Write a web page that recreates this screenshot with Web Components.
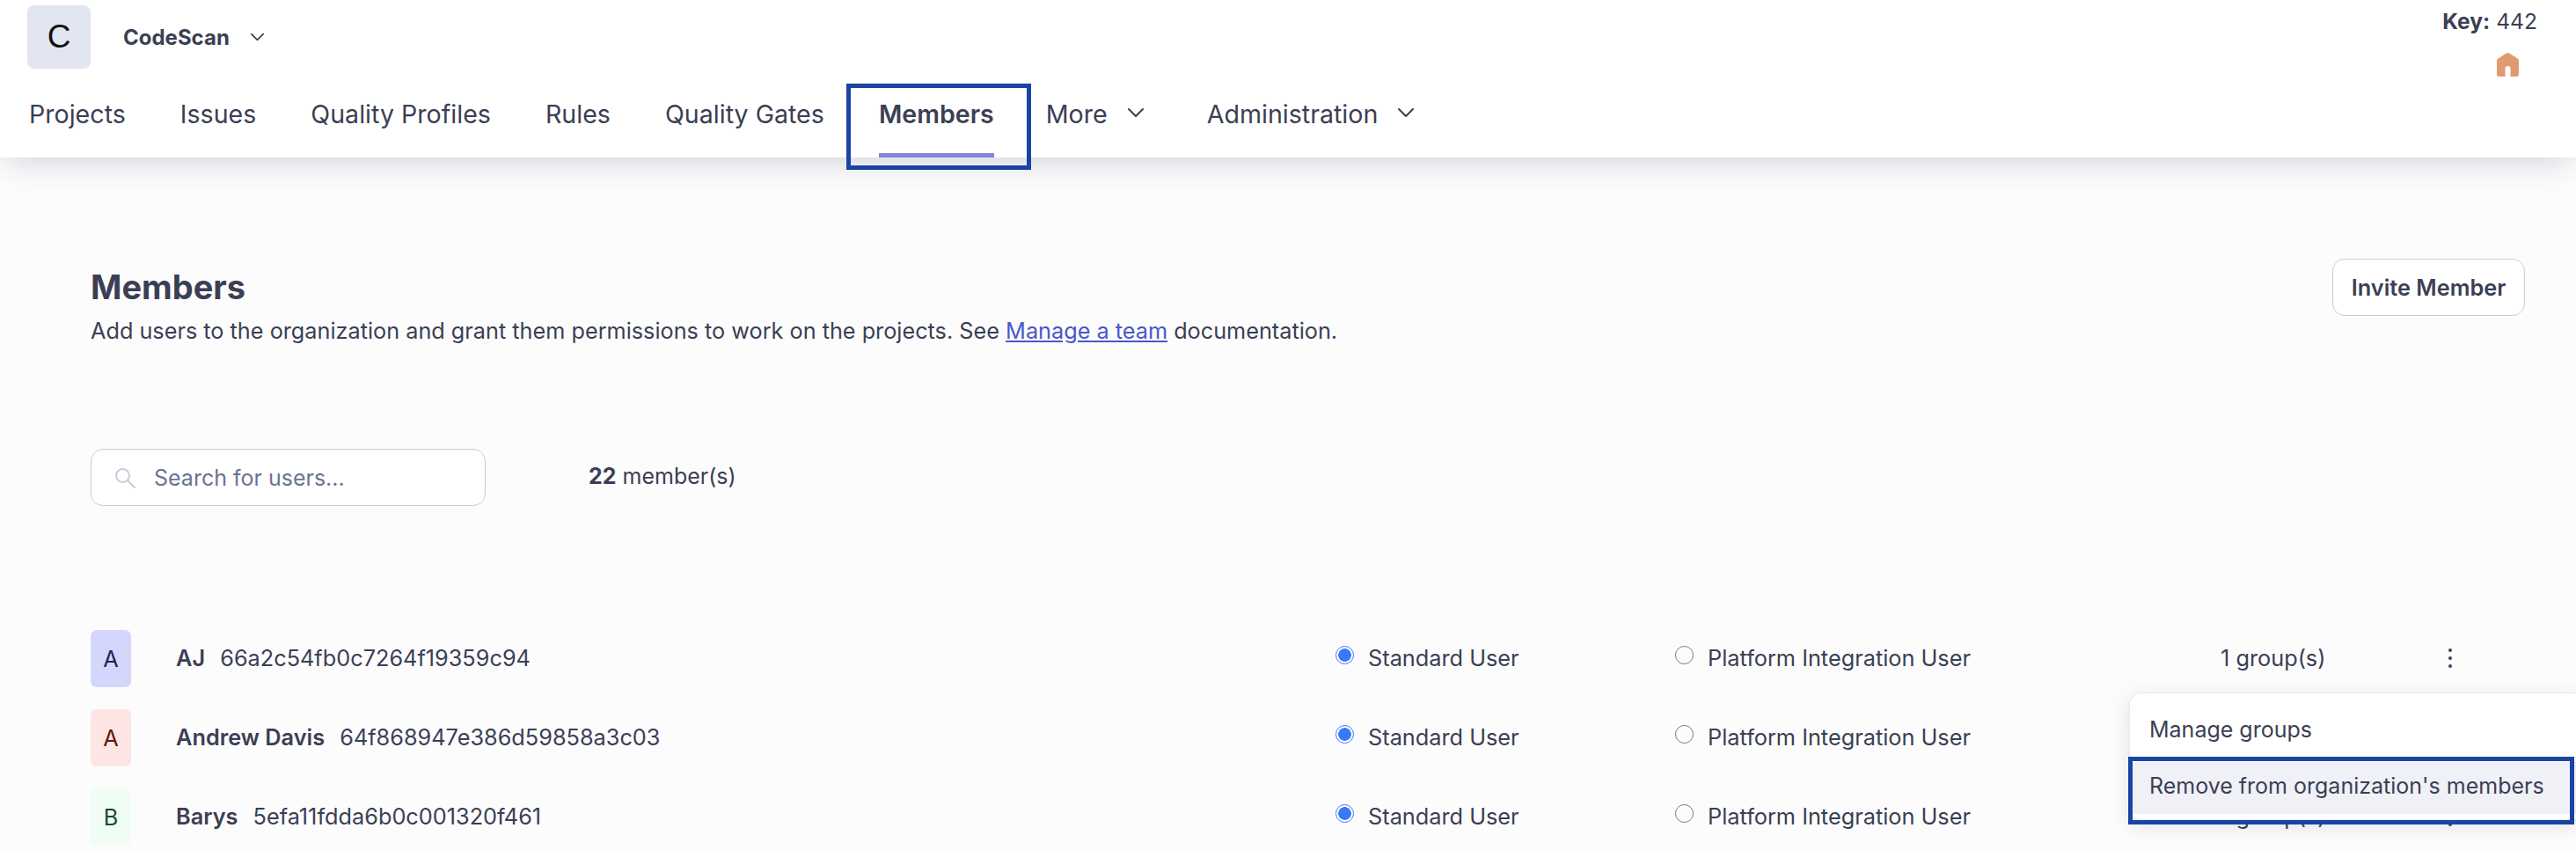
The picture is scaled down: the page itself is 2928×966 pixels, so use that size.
<!DOCTYPE html>
<html>
<head>
<meta charset="utf-8">
<title>Members</title>
<style>
  html, body { margin: 0; padding: 0; }
  body {
    width: 2928px;
    height: 966px;
    overflow: hidden;
    background: #fcfcfd;
    font-family: Inter, "Liberation Sans", sans-serif;
    color: #3b3f54;
  }
</style>
</head>
<body>
<cs-header></cs-header>
<cs-members></cs-members>

<script>
const chevron = `<svg width="18" height="10" viewBox="0 0 18 10" fill="none"><path d="M1 1l8 8 8-8" stroke="currentColor" stroke-width="2" stroke-linecap="round" stroke-linejoin="round"/></svg>`

class CsNavItem extends HTMLElement {
    constructor() {
        super()
        this.shadowDOM = this.attachShadow({mode:"open"})
        this.shadowDOM.innerHTML = `
            <style>
            :host {
                display: block;
                position: relative;
                height: 84px;
                font-size: 28.6px;
                line-height: 34px;
                padding-top: 18px;
                box-sizing: border-box;
                white-space: nowrap;
            }
            :host([active]) { font-weight: 600; }
            :host([active])::after {
                content: "";
                position: absolute;
                left: 0;
                right: 0;
                bottom: 0;
                height: 5px;
                background: #7f86d6;
            }
            .mark {
                display: none;
                position: absolute;
                left: -37px;
                right: -42px;
                top: 0;
                height: 98px;
                border: 5px solid #1a44a4;
                box-sizing: border-box;
            }
            :host([active]) .mark { display: block; }
            .chev { display: none; margin-left: 23px; line-height: 0; vertical-align: 7px; }
            .chev svg { display: block; }
            :host([menu]) .chev { display: inline-block; }
            </style>
            <slot></slot><span class="chev">${chevron}</span><span class="mark"></span>
        `
    }
}

class CsHeader extends HTMLElement {
    constructor() {
        super()
        this.shadowDOM = this.attachShadow({mode:"open"})
        this.shadowDOM.innerHTML = `
            <style>
            :host {
                display: block;
                position: relative;
                z-index: 1;
                height: 179px;
                background: #fff;
                box-shadow: 0 10px 34px -6px rgba(40,44,70,.2);
            }
            .top {
                display: flex;
                height: 95px;
                padding: 6px 44px 0 31px;
                box-sizing: border-box;
            }
            .logo {
                width: 72px;
                height: 72px;
                border-radius: 8px;
                background: #e2e5f2;
                color: #111;
                font-family: "Liberation Sans", sans-serif;
                font-size: 37px;
                display: flex;
                align-items: center;
                justify-content: center;
            }
            .org {
                display: flex;
                align-items: center;
                height: 72px;
                margin-left: 37px;
                font-size: 24px;
                font-weight: 700;
            }
            .org svg { margin-left: 24px; width: 15px; }
            .key {
                margin-left: auto;
                font-size: 24.6px;
                line-height: 36px;
                display: flex;
                flex-direction: column;
                align-items: flex-end;
            }
            .key b { font-weight: 700; }
            .key svg { margin: 18px 21px 0 0; display: block; }
            nav {
                display: flex;
                gap: 62px;
                padding-left: 33px;
            }
            cs-nav-item.more { margin-left: -3px; }
            cs-nav-item.admin { margin-left: 10px; }
            </style>
            <div class="top">
                <div class="logo">C</div>
                <div class="org">CodeScan ${chevron}</div>
                <div class="key">
                    <div><b>Key:</b> 442</div>
                    <svg width="25" height="27" viewBox="0 0 25 27"><path d="M10.800.600q1.700-1.100 3.400 0L23.500 6.500a3.200 3.200 0 0 1 1.500 2.700V24.500a2.500 2.500 0 0 1-2.500 2.500H15.500V18a3 3 0 0 0-6 0V27H2.500A2.500 2.500 0 0 1 0 24.500V9.200a3.200 3.200 0 0 1 1.500-2.700Z" fill="#e09a72"/></svg>
                </div>
            </div>
            <nav>
                <cs-nav-item>Projects</cs-nav-item>
                <cs-nav-item>Issues</cs-nav-item>
                <cs-nav-item>Quality Profiles</cs-nav-item>
                <cs-nav-item>Rules</cs-nav-item>
                <cs-nav-item>Quality Gates</cs-nav-item>
                <cs-nav-item active>Members</cs-nav-item>
                <cs-nav-item menu class="more">More</cs-nav-item>
                <cs-nav-item menu class="admin">Administration</cs-nav-item>
            </nav>
        `
    }
}

class CsRadio extends HTMLElement {
    constructor() {
        super()
        this.shadowDOM = this.attachShadow({mode:"open"})
        this.shadowDOM.innerHTML = `
            <style>
            :host {
                display: flex;
                align-items: center;
                gap: 16px;
                font-size: 25.3px;
                white-space: nowrap;
            }
            i {
                width: 21px;
                height: 21px;
                margin-top: -5px;
                border-radius: 50%;
                border: 1.5px solid #77797f;
                box-sizing: border-box;
                flex: none;
            }
            :host([checked]) i {
                border-color: #3a78f5;
                background: radial-gradient(circle, #3a78f5 0 7px, #fff 7.6px);
            }
            </style>
            <i></i><slot></slot>
        `
    }
}

class CsMemberRow extends HTMLElement {
    constructor() {
        super()
        this.shadowDOM = this.attachShadow({mode:"open"})
        const name = this.getAttribute("name")
        // the open row menu covers the group count and the dots of a covered row
        const covered = this.hasAttribute("covered")
        this.shadowDOM.innerHTML = `
            <style>
            :host {
                display: flex;
                align-items: center;
                height: 65px;
                font-size: 25.3px;
                margin-bottom: 25px;
                --bg: #d4d7fb;
                --fg: #1e2259;
            }
            .avatar {
                width: 46px;
                height: 65px;
                border-radius: 7px;
                background: var(--bg);
                color: var(--fg);
                display: flex;
                align-items: center;
                justify-content: center;
                flex: none;
            }
            .who { margin-left: 51px; width: 1318px; white-space: nowrap; }
            .who, cs-radio, .groups { margin-bottom: 3px; }
            .who b { font-weight: 600; margin-right: 10px; }
            .user { width: 386px; }
            .integration { width: 620px; }
            .groups { width: 258px; white-space: nowrap; }
            svg { display: block; margin-bottom: 2px; }
            </style>
            <div class="avatar">${name[0]}</div>
            <div class="who"><b>${name}</b> ${this.getAttribute("uid")}</div>
            <cs-radio class="user" checked>Standard User</cs-radio>
            <cs-radio class="integration">Platform Integration User</cs-radio>
            ${covered ? "" : `<div class="groups">1 group(s)</div>
            <svg width="6" height="24" viewBox="0 0 6 24" fill="#3b3f54"><circle cx="3" cy="3" r="2"/><circle cx="3" cy="12" r="2"/><circle cx="3" cy="21" r="2"/></svg>`}
        `
    }
}

class CsRowMenu extends HTMLElement {
    constructor() {
        super()
        this.shadowDOM = this.attachShadow({mode:"open"})
        this.shadowDOM.innerHTML = `
            <style>
            :host {
                display: block;
                position: absolute;
                left: 2420px;
                top: 787px;
                width: 508px;
                height: 145px;
                box-sizing: border-box;
                padding-top: 12px;
                background: #fff;
                border: 1px solid #e6e8f2;
                border-right: 0;
                border-radius: 14px 0 0 14px;
                box-shadow: 0 6px 24px rgba(40,44,70,.13);
                font-size: 25px;
                white-space: nowrap;
            }
            div { height: 66px; line-height: 58px; padding-left: 22px; }
            .hover {
                position: relative;
                height: 59px;
                line-height: 54px;
                margin-top: 0;
                background: #f0f1f7;
            }
            .mark {
                position: absolute;
                left: -2px;
                top: -6px;
                width: 507px;
                height: 77px;
                padding: 0;
                border: 5px solid #1a44a4;
                box-sizing: border-box;
            }
            </style>
            <div>Manage groups</div>
            <div class="hover">Remove from organization's members<div class="mark"></div></div>
        `
    }
}

class CsMembers extends HTMLElement {
    constructor() {
        super()
        this.shadowDOM = this.attachShadow({mode:"open"})
        this.shadowDOM.innerHTML = `
            <style>
            :host {
                display: block;
                padding: 115px 58px 0 103px;
            }
            .head { display: flex; justify-content: space-between; align-items: flex-start; }
            h1 {
                margin: 0 0 -2px;
                font-size: 38px;
                line-height: 64px;
                font-weight: 700;
            }
            p { margin: 0; font-size: 25.25px; line-height: 40px; }
            a { color: #4a57c9; }
            button {
                width: 219px;
                height: 65px;
                background: #fff;
                border: 1.5px solid #c6cce0;
                border-radius: 14px;
                font: 600 25.300px Inter, sans-serif;
                color: #3b3f54;
            }
            .tools {
                display: flex;
                align-items: center;
                margin-top: 114px;
                font-size: 25px;
            }
            .search {
                display: flex;
                align-items: center;
                width: 449px;
                height: 65px;
                box-sizing: border-box;
                padding-left: 26px;
                background: #fff;
                border: 1.5px solid #c6cce0;
                border-radius: 14px;
                color: #6b7394;
            }
            .search svg { margin-right: 21px; }
            .count { margin-left: 117px; margin-top: -4px; }
            .count b { font-weight: 700; }
            .rows { margin-top: 141px; }
            </style>
            <div class="head">
                <div>
                    <h1>Members</h1>
                    <p>Add users to the organization and grant them permissions to work on the projects. See <a href="#">Manage a team</a> documentation.</p>
                </div>
                <button>Invite Member</button>
            </div>
            <div class="tools">
                <div class="search">
                    <svg width="24" height="24" viewBox="0 0 24 24" fill="none" stroke="#c6cce0" stroke-width="2"><circle cx="9.500" cy="9.500" r="7.500"/><path d="M15 15l8 8" stroke-linecap="round"/></svg>
                    Search for users...
                </div>
                <div class="count"><b>22</b> member(s)</div>
            </div>
            <div class="rows">
                <cs-member-row name="AJ" uid="66a2c54fb0c7264f19359c94"></cs-member-row>
                <cs-member-row name="Andrew Davis" uid="64f868947e386d59858a3c03" covered style="--bg:#fce5e3;--fg:#5e1a10"></cs-member-row>
                <cs-member-row name="Barys" uid="5efa11fdda6b0c001320f461" style="--bg:#f0fdf4;--fg:#164a2b"></cs-member-row>
            </div>
            <cs-row-menu></cs-row-menu>
        `
    }
}

customElements.define("cs-nav-item", CsNavItem)
customElements.define("cs-header", CsHeader)
customElements.define("cs-radio", CsRadio)
customElements.define("cs-member-row", CsMemberRow)
customElements.define("cs-row-menu", CsRowMenu)
customElements.define("cs-members", CsMembers)
</script>
</body>
</html>
